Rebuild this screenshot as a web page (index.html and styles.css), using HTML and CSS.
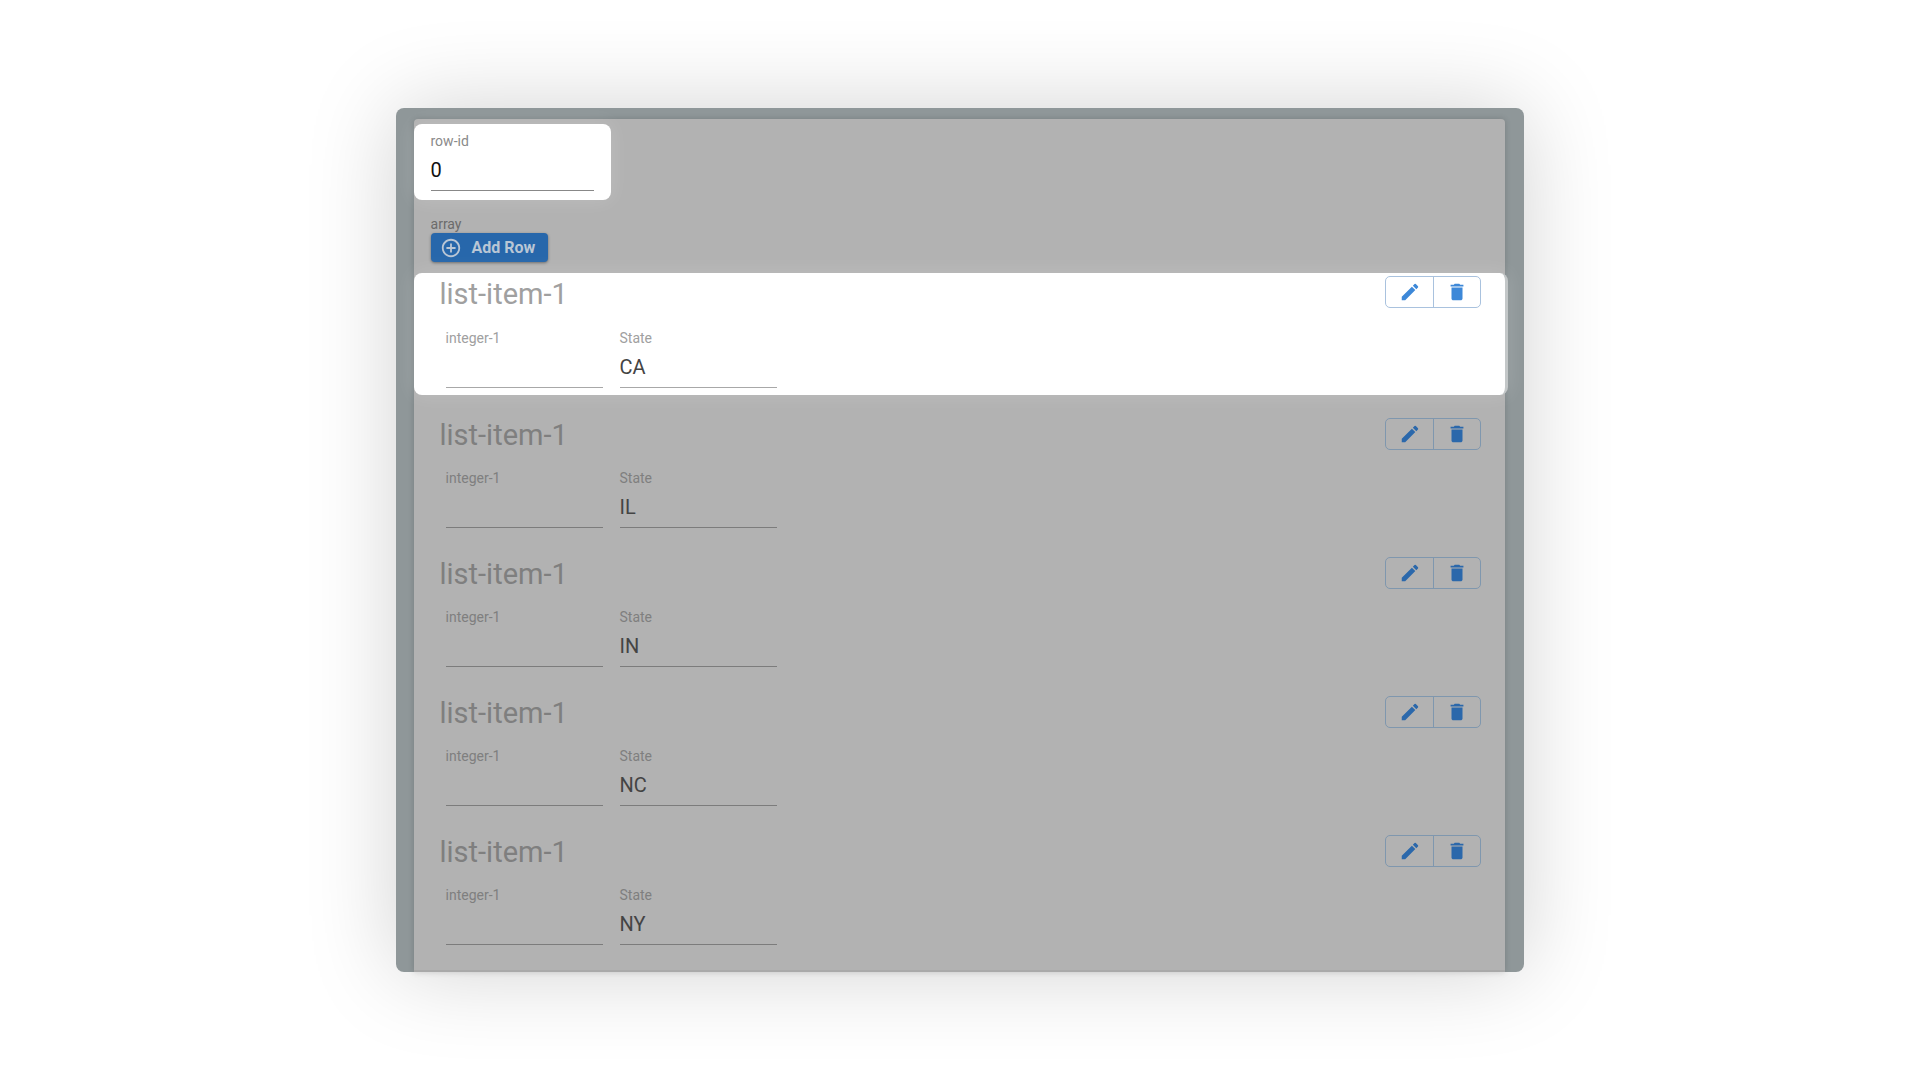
FILE: index.html
```html
<!DOCTYPE html>
<html lang="en">
	<head>
		<meta charset="utf-8" />
		<title>Add Row</title>
		<link rel="stylesheet" href="styles.css">
	</head>
	<body>
		<!--icons used by the buttons-->
		<svg class="sprite" aria-hidden="true">
			<symbol id="edit" viewBox="0 0 24 24"><path d="M3 17.25V21h3.75L17.81 9.94l-3.75-3.75L3 17.25zM20.71 7.04c.39-.39.39-1.02 0-1.41l-2.34-2.34a.996.996 0 0 0-1.41 0l-1.83 1.83 3.75 3.75 1.83-1.83z"/></symbol>
			<symbol id="delete" viewBox="0 0 24 24"><path d="M6 19c0 1.100.9 2 2 2h8c1.100 0 2-.9 2-2V7H6v12zM19 4h-3.500l-1-1h-5l-1 1H5v2h14V4z"/></symbol>
			<symbol id="add" viewBox="0 0 24 24"><path d="M13 7h-2v4H7v2h4v4h2v-4h4v-2h-4V7zm-1-5C6.480 2 2 6.480 2 12s4.480 10 10 10 10-4.480 10-10S17.520 2 12 2zm0 18c-4.410 0-8-3.590-8-8s3.590-8 8-8 8 3.590 8 8-3.590 8-8 8z"/></symbol>
		</svg>
		<main class="frame">
			<div class="panel">
				<!--row id-->
				<div class="row-id lit">
					<div class="field">
						<label for="row-id">row-id</label>
						<input id="row-id" type="text" value="0">
					</div>
				</div>
				<!--array-->
				<div class="array">
					<div class="array-label">array</div>
					<button class="add" type="button"><svg><use href="#add"/></svg>Add Row</button>
				</div>
				<section class="item lit">
					<div class="item-head">
						<h2>list-item-1</h2>
						<div class="actions">
							<button type="button" aria-label="Edit"><svg><use href="#edit"/></svg></button>
							<button type="button" aria-label="Delete"><svg><use href="#delete"/></svg></button>
						</div>
					</div>
					<div class="fields">
						<div class="field"><label for="int1">integer-1</label><input id="int1" type="text"></div>
						<div class="field"><label for="state1">State</label><input id="state1" type="text" value="CA"></div>
					</div>
				</section>
				<section class="item">
					<div class="item-head">
						<h2>list-item-1</h2>
						<div class="actions">
							<button type="button" aria-label="Edit"><svg><use href="#edit"/></svg></button>
							<button type="button" aria-label="Delete"><svg><use href="#delete"/></svg></button>
						</div>
					</div>
					<div class="fields">
						<div class="field"><label for="int2">integer-1</label><input id="int2" type="text"></div>
						<div class="field"><label for="state2">State</label><input id="state2" type="text" value="IL"></div>
					</div>
				</section>
				<section class="item">
					<div class="item-head">
						<h2>list-item-1</h2>
						<div class="actions">
							<button type="button" aria-label="Edit"><svg><use href="#edit"/></svg></button>
							<button type="button" aria-label="Delete"><svg><use href="#delete"/></svg></button>
						</div>
					</div>
					<div class="fields">
						<div class="field"><label for="int3">integer-1</label><input id="int3" type="text"></div>
						<div class="field"><label for="state3">State</label><input id="state3" type="text" value="IN"></div>
					</div>
				</section>
				<section class="item">
					<div class="item-head">
						<h2>list-item-1</h2>
						<div class="actions">
							<button type="button" aria-label="Edit"><svg><use href="#edit"/></svg></button>
							<button type="button" aria-label="Delete"><svg><use href="#delete"/></svg></button>
						</div>
					</div>
					<div class="fields">
						<div class="field"><label for="int4">integer-1</label><input id="int4" type="text"></div>
						<div class="field"><label for="state4">State</label><input id="state4" type="text" value="NC"></div>
					</div>
				</section>
				<section class="item">
					<div class="item-head">
						<h2>list-item-1</h2>
						<div class="actions">
							<button type="button" aria-label="Edit"><svg><use href="#edit"/></svg></button>
							<button type="button" aria-label="Delete"><svg><use href="#delete"/></svg></button>
						</div>
					</div>
					<div class="fields">
						<div class="field"><label for="int5">integer-1</label><input id="int5" type="text"></div>
						<div class="field"><label for="state5">State</label><input id="state5" type="text" value="NY"></div>
					</div>
				</section>
			</div>
		</main>
	</body>
</html>
```
FILE: styles.css
```css
*{margin: 0;padding: 0;box-sizing: border-box;}
body{min-height: 100vh;display: flex;align-items: center;justify-content: center;background: #fff;font-family: Roboto, "Liberation Sans", sans-serif;}
button,input{font-family: inherit;border: none;background: none;}
.sprite{display: none;}
/*frame*/
.frame{width: 58.8%;min-width: 720px;padding: 11px 19px 0 18px;border-radius: 8px;background: #8f9799;box-shadow: 0 0 90px rgba(0,0,0,.18);}
.panel{padding: 5px 0 16px;border-radius: 4px 4px 0 0;border-bottom: 2px solid #a9a9a9;background: #b2b2b2;box-shadow: 0 0 6px rgba(0,0,0,.16);}
.lit{border-radius: 8px;background: #fff;box-shadow: 0 0 20px rgba(255,255,255,.16);}
/*fields*/
.field{display: flex;flex-direction: column;width: 157px;}
.field label{font-size: 14px;line-height: 16px;color: #7f7f7f;}
.field input{width: 100%;height: 42px;font-size: 20px;color: #444;border-bottom: 1px solid #7c7c7c;}
.lit label{color: #a0a0a0;}
.lit input{border-bottom-color: #a8a8a8;}
.row-id{width: 197px;height: 76px;padding: 9px 17px;}
.row-id .field{width: 100%;}
.row-id label{color: #8a8a8a;}
.row-id input{color: #111;border-bottom-color: #888;}
/*add row*/
.array{padding: 15px 17px 11px;}
.array-label{font-size: 14px;line-height: 18px;color: #6b6b6b;}
.add{display: flex;align-items: center;gap: 10px;height: 29px;padding: 0 13px 0 9px;border-radius: 4px;background: #2767ab;color: #b9c6d5;font-size: 16px;font-weight: 700;box-shadow: 0 1px 3px rgba(0,0,0,.4);}
.add svg{width: 22px;height: 22px;fill: currentColor;}
/*list items*/
.item{height: 122px;padding: 3px 24px 0 26px;margin-bottom: 17px;}
.item:last-child{margin-bottom: 0;}
.item.lit{margin-right: -3px;margin-bottom: 20px;border-right: 3px solid #c3c7c8;}
.item-head{display: flex;justify-content: space-between;}
.item h2{font-size: 29px;line-height: 34px;font-weight: 400;color: #7f7f7f;}
.item.lit h2{line-height: 36px;color: #a0a0a0;}
.fields{display: flex;gap: 17px;padding: 18px 6px 0;}
.actions{display: flex;width: 96px;height: 32px;border: 1px solid #7f97ae;border-radius: 5px;}
.actions button{flex: 1;display: flex;align-items: center;justify-content: center;}
.actions button + button{border-left: 1px solid #7f97ae;}
.actions svg{width: 22px;height: 22px;fill: #2b68ab;}
.lit .actions,.lit .actions button + button{border-color: #a9c2de;}
.lit .actions svg{fill: #3d88d8;}
```
